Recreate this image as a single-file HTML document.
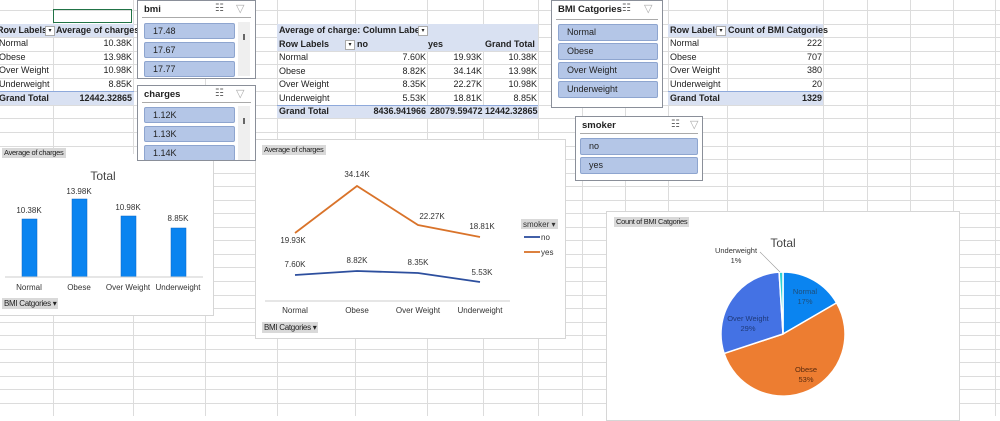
<!DOCTYPE html>
<html><head><meta charset="utf-8"><style>
body{margin:0;width:1000px;height:416px;overflow:hidden;background:#fff;font-family:"Liberation Sans",sans-serif;position:relative;font-size:9px;color:#222}
.a{position:absolute}
.t{position:absolute;white-space:nowrap;line-height:13px}
.r{text-align:right}
.b{font-weight:bold}
.hl{position:absolute;background:#d9e1f2}
.sl{position:absolute;background:#fff;border:1px solid #8a8f99;box-sizing:border-box;z-index:5;overflow:hidden}
.sl .h{position:absolute;left:6px;top:3px;font-weight:bold;font-size:9.5px}
.sl .ln{position:absolute;left:4px;right:4px;top:16px;border-top:1px solid #aaa}
.btn{position:absolute;background:#b4c6e7;border:1px solid #8ea5cf;border-radius:2px;box-sizing:border-box;font-size:9px;line-height:15px;padding-left:8px;color:#222}
.ch{position:absolute;background:#fff;border:1px solid #d6d6d6;box-sizing:border-box}
.tag{position:absolute;background:#d9d9d9;font-size:7.5px;line-height:10px;padding:0 2px;letter-spacing:-0.3px}
</style></head><body>
<svg class="a" style="left:0;top:0" width="1000" height="416">
<g stroke="#dcdcdc" stroke-width="1">
<line x1="53.5" y1="0" x2="53.5" y2="416"/><line x1="133.5" y1="0" x2="133.5" y2="416"/><line x1="205.5" y1="0" x2="205.5" y2="416"/><line x1="277.5" y1="0" x2="277.5" y2="416"/><line x1="355.5" y1="0" x2="355.5" y2="416"/><line x1="427.5" y1="0" x2="427.5" y2="416"/><line x1="483.5" y1="0" x2="483.5" y2="416"/><line x1="538.5" y1="0" x2="538.5" y2="416"/><line x1="582.5" y1="0" x2="582.5" y2="416"/><line x1="625.5" y1="0" x2="625.5" y2="416"/><line x1="668.5" y1="0" x2="668.5" y2="416"/><line x1="727.5" y1="0" x2="727.5" y2="416"/><line x1="823.5" y1="0" x2="823.5" y2="416"/><line x1="867.5" y1="0" x2="867.5" y2="416"/><line x1="910.5" y1="0" x2="910.5" y2="416"/><line x1="953.5" y1="0" x2="953.5" y2="416"/><line x1="995.5" y1="0" x2="995.5" y2="416"/>
</g>
<g stroke="#dcdcdc" id="rows"></g>
</svg>
<script>
var g=document.getElementById('rows'),s='';for(var y=10;y<416;y+=13.55){var yy=Math.round(y)+0.5;s+='<line x1="0" y1="'+yy+'" x2="1000" y2="'+yy+'"/>'}g.innerHTML=s;
</script>
<div class="a" style="left:53px;top:9px;width:79px;height:14px;border:1.5px solid #217346;box-sizing:border-box"></div>
<!-- pivot 1 -->
<div class="hl" style="left:0;top:24px;width:134px;height:13px"></div>
<div class="t b" style="left:-3px;top:24px">Row Labels</div>
<div class="a" style="left:45px;top:26px;width:8px;height:8px;border:1px solid #aaa;background:#fff;font-size:6px;line-height:8px;text-align:center">▾</div>
<div class="t b" style="left:56px;top:24px">Average of charges</div>
<div class="t" style="left:-1px;top:37px">Normal</div><div class="t r" style="left:60px;width:72px;top:37px">10.38K</div>
<div class="t" style="left:-1px;top:51px">Obese</div><div class="t r" style="left:60px;width:72px;top:51px">13.98K</div>
<div class="t" style="left:-1px;top:64px">Over Weight</div><div class="t r" style="left:60px;width:72px;top:64px">10.98K</div>
<div class="t" style="left:-1px;top:78px">Underweight</div><div class="t r" style="left:60px;width:72px;top:78px">8.85K</div>
<div class="hl" style="left:0;top:91px;width:134px;height:14px;border-top:1px solid #8ea9db;box-sizing:border-box"></div>
<div class="t b" style="left:-1px;top:92px">Grand Total</div><div class="t r b" style="left:60px;width:72px;top:92px">12442.32865</div>
<!-- pivot 2 -->
<div class="hl" style="left:277px;top:24px;width:261px;height:27px"></div>
<div class="t b" style="left:279px;top:24px">Average of charge: Column Label:</div>
<div class="a" style="left:418px;top:26px;width:8px;height:8px;border:1px solid #aaa;background:#fff;font-size:6px;line-height:8px;text-align:center">▾</div>
<div class="t b" style="left:279px;top:38px">Row Labels</div>
<div class="a" style="left:345px;top:40px;width:8px;height:8px;border:1px solid #aaa;background:#fff;font-size:6px;line-height:8px;text-align:center">▾</div>
<div class="t b" style="left:357px;top:38px">no</div><div class="t b" style="left:428px;top:38px">yes</div><div class="t b" style="left:485px;top:38px">Grand Total</div>
<div class="t" style="left:279px;top:51px">Normal</div><div class="t r" style="left:370px;width:56px;top:51px">7.60K</div><div class="t r" style="left:430px;width:52px;top:51px">19.93K</div><div class="t r" style="left:485px;width:52px;top:51px">10.38K</div>
<div class="t" style="left:279px;top:65px">Obese</div><div class="t r" style="left:370px;width:56px;top:65px">8.82K</div><div class="t r" style="left:430px;width:52px;top:65px">34.14K</div><div class="t r" style="left:485px;width:52px;top:65px">13.98K</div>
<div class="t" style="left:279px;top:78px">Over Weight</div><div class="t r" style="left:370px;width:56px;top:78px">8.35K</div><div class="t r" style="left:430px;width:52px;top:78px">22.27K</div><div class="t r" style="left:485px;width:52px;top:78px">10.98K</div>
<div class="t" style="left:279px;top:92px">Underweight</div><div class="t r" style="left:370px;width:56px;top:92px">5.53K</div><div class="t r" style="left:430px;width:52px;top:92px">18.81K</div><div class="t r" style="left:485px;width:52px;top:92px">8.85K</div>
<div class="hl" style="left:277px;top:105px;width:261px;height:13px;border-top:1px solid #8ea9db;box-sizing:border-box"></div>
<div class="t b" style="left:279px;top:105px">Grand Total</div><div class="t r b" style="left:340px;width:86px;top:105px">8436.941966</div><div class="t r b" style="left:430px;width:52px;top:105px">28079.59472</div><div class="t r b" style="left:485px;width:52px;top:105px">12442.32865</div>
<!-- pivot 3 -->
<div class="hl" style="left:668px;top:24px;width:155px;height:13px"></div>
<div class="t b" style="left:670px;top:24px">Row Labels</div>
<div class="a" style="left:716px;top:26px;width:8px;height:8px;border:1px solid #aaa;background:#fff;font-size:6px;line-height:8px;text-align:center">▾</div>
<div class="t b" style="left:728px;top:24px">Count of BMI Catgories</div>
<div class="t" style="left:670px;top:37px">Normal</div><div class="t r" style="left:760px;width:62px;top:37px">222</div>
<div class="t" style="left:670px;top:51px">Obese</div><div class="t r" style="left:760px;width:62px;top:51px">707</div>
<div class="t" style="left:670px;top:64px">Over Weight</div><div class="t r" style="left:760px;width:62px;top:64px">380</div>
<div class="t" style="left:670px;top:78px">Underweight</div><div class="t r" style="left:760px;width:62px;top:78px">20</div>
<div class="hl" style="left:668px;top:91px;width:155px;height:14px;border-top:1px solid #8ea9db;box-sizing:border-box"></div>
<div class="t b" style="left:670px;top:92px">Grand Total</div><div class="t r b" style="left:760px;width:62px;top:92px">1329</div>
<!-- slicers -->
<div class="sl" style="left:137px;top:0;width:119px;height:79px"><div class="h">bmi</div><div class="a" style="left:77px;top:2px;color:#666;font-size:10px">☷</div><div class="a" style="left:98px;top:1px;color:#aaa;font-size:11px">▽</div><div class="ln"></div>
<div class="btn" style="left:6px;top:22px;width:91px;height:16px">17.48</div><div class="btn" style="left:6px;top:41px;width:91px;height:16px">17.67</div><div class="btn" style="left:6px;top:60px;width:91px;height:16px">17.77</div>
<div class="a" style="left:100px;top:21px;width:12px;height:54px;background:#efefef"></div><div class="a" style="left:105px;top:33px;width:2px;height:6px;background:#666"></div></div>
<div class="sl" style="left:137px;top:85px;width:119px;height:76px"><div class="h">charges</div><div class="a" style="left:77px;top:2px;color:#666;font-size:10px">☷</div><div class="a" style="left:98px;top:1px;color:#aaa;font-size:11px">▽</div><div class="ln"></div>
<div class="btn" style="left:6px;top:21px;width:91px;height:16px">1.12K</div><div class="btn" style="left:6px;top:40px;width:91px;height:16px">1.13K</div><div class="btn" style="left:6px;top:59px;width:91px;height:16px">1.14K</div>
<div class="a" style="left:100px;top:20px;width:12px;height:54px;background:#efefef"></div><div class="a" style="left:105px;top:32px;width:2px;height:6px;background:#666"></div></div>
<div class="sl" style="left:551px;top:0;width:112px;height:108px"><div class="h">BMI Catgories</div><div class="a" style="left:70px;top:2px;color:#666;font-size:10px">☷</div><div class="a" style="left:92px;top:1px;color:#aaa;font-size:11px">▽</div><div class="ln" style="top:18px"></div>
<div class="btn" style="left:6px;top:23px;width:100px;height:17px">Normal</div><div class="btn" style="left:6px;top:42px;width:100px;height:17px">Obese</div><div class="btn" style="left:6px;top:61px;width:100px;height:17px">Over Weight</div><div class="btn" style="left:6px;top:80px;width:100px;height:17px">Underweight</div></div>
<div class="sl" style="left:575px;top:116px;width:128px;height:65px"><div class="h">smoker</div><div class="a" style="left:95px;top:2px;color:#666;font-size:10px">☷</div><div class="a" style="left:114px;top:1px;color:#aaa;font-size:11px">▽</div><div class="ln"></div>
<div class="btn" style="left:4px;top:21px;width:118px;height:17px">no</div><div class="btn" style="left:4px;top:40px;width:118px;height:17px">yes</div></div>
<!-- bar chart -->
<div class="ch" style="left:-1px;top:154px;width:215px;height:162px;border-top:none"></div>
<div class="tag" style="left:2px;top:148px">Average of charges</div>
<svg class="a" style="left:0;top:140px" width="215" height="180" font-family="Liberation Sans" font-size="8" fill="#333">
<text x="103" y="40" font-size="12" text-anchor="middle" fill="#444">Total</text>
<g fill="#0a84f0" stroke="#0866c4" stroke-width=".5"><rect x="22" y="79" width="15" height="58"/><rect x="72" y="59" width="15" height="78"/><rect x="121" y="76" width="15" height="61"/><rect x="171" y="88" width="15" height="49"/></g>
<line x1="5" y1="137" x2="203" y2="137" stroke="#ccc"/>
<g text-anchor="middle"><text x="29" y="73">10.38K</text><text x="79" y="54">13.98K</text><text x="128" y="70">10.98K</text><text x="178" y="81">8.85K</text>
<text x="29" y="150">Normal</text><text x="79" y="150">Obese</text><text x="128" y="150">Over Weight</text><text x="178" y="150">Underweight</text></g>
</svg>
<div class="tag" style="left:2px;top:298px;font-size:8px;line-height:11px">BMI Catgories ▾</div>
<!-- line chart -->
<div class="ch" style="left:255px;top:139px;width:311px;height:200px"></div>
<div class="tag" style="left:262px;top:145px">Average of charges</div>
<svg class="a" style="left:250px;top:135px" width="320" height="210" font-family="Liberation Sans" font-size="8" fill="#333">
<polyline points="45,98 107,51 168,90 230,102" fill="none" stroke="#d9732a" stroke-width="1.8"/>
<polyline points="45,140 107,136 168,138 230,147" fill="none" stroke="#2d4f9e" stroke-width="1.8"/>
<line x1="15" y1="166" x2="260" y2="166" stroke="#ccc"/>
<g text-anchor="middle"><text x="107" y="42">34.14K</text><text x="43" y="108">19.93K</text><text x="182" y="84">22.27K</text><text x="232" y="94">18.81K</text>
<text x="45" y="132">7.60K</text><text x="107" y="128">8.82K</text><text x="168" y="130">8.35K</text><text x="232" y="140">5.53K</text>
<text x="45" y="178">Normal</text><text x="107" y="178">Obese</text><text x="168" y="178">Over Weight</text><text x="230" y="178">Underweight</text></g>
<rect x="271" y="84" width="37" height="10" fill="#d9d9d9"/><text x="273" y="92">smoker ▾</text>
<line x1="274" y1="102" x2="290" y2="102" stroke="#2d4f9e" stroke-width="1.8"/><text x="291" y="105">no</text>
<line x1="274" y1="117" x2="290" y2="117" stroke="#d9732a" stroke-width="1.8"/><text x="291" y="120">yes</text>
</svg>
<div class="tag" style="left:262px;top:322px;font-size:8px;line-height:11px">BMI Catgories ▾</div>
<!-- pie chart -->
<div class="ch" style="left:606px;top:211px;width:354px;height:210px"></div>
<div class="tag" style="left:614px;top:217px">Count of BMI Catgories</div>
<svg class="a" style="left:600px;top:200px" width="400" height="216" font-family="Liberation Sans" font-size="7.5" fill="#333">
<text x="183" y="47" font-size="12" text-anchor="middle" fill="#444">Total</text>
<g stroke="#fff" stroke-width="1.5">
<path d="M183,134 L183,72 A62,62 0 0 1 236.6,102.9 Z" fill="#0a84f0"/>
<path d="M183,134 L236.6,102.9 A62,62 0 1 1 124.1,153.4 Z" fill="#ed7d31"/>
<path d="M183,134 L124.1,153.4 A62,62 0 0 1 179.1,72.1 Z" fill="#4472e4"/>
<path d="M183,134 L179.1,72.1 A62,62 0 0 1 183,72 Z" fill="#2ad1d6"/>
</g>
<line x1="160" y1="52" x2="180" y2="72" stroke="#999" stroke-width=".6"/>
<g text-anchor="middle"><text x="136" y="53">Underweight</text><text x="136" y="63">1%</text>
<text x="205" y="94" fill="#1f4e79">Normal</text><text x="205" y="104" fill="#1f4e79">17%</text>
<text x="148" y="121" fill="#1f3a7a">Over Weight</text><text x="148" y="131" fill="#1f3a7a">29%</text>
<text x="206" y="172" fill="#5a2b0f">Obese</text><text x="206" y="182" fill="#5a2b0f">53%</text></g>
</svg>
</body></html>
